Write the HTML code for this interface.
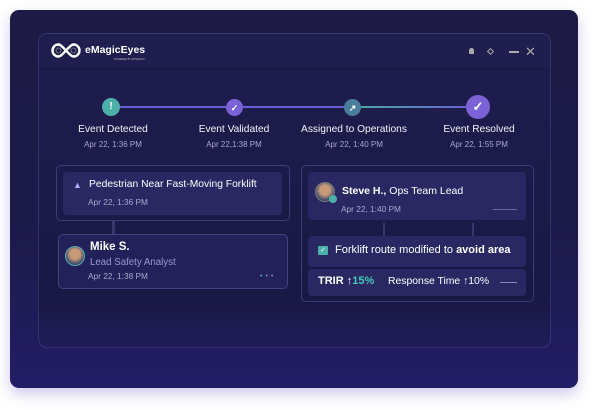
<!DOCTYPE html>
<html><head><style>
*{margin:0;padding:0;box-sizing:border-box}
body{width:600px;height:410px;background:#fff;font-family:"Liberation Sans",sans-serif;position:relative;overflow:hidden}
.abs{position:absolute;white-space:nowrap}
.outer{left:10px;top:10px;width:568px;height:378px;border-radius:9px;background:linear-gradient(180deg,#1d1b45 0%,#1c1a48 55%,#231d66 100%);box-shadow:0 6px 14px rgba(120,100,200,.35)}
.panel{left:38px;top:33px;width:513px;height:315px;border-radius:9px;border:1px solid rgba(120,110,200,.25);background:linear-gradient(180deg,#1f1d4e 0%,#1a1844 85%,#201d5a 100%)}
.hdr{left:39px;top:34px;width:511px;height:35px;border-radius:8px 8px 0 0;background:#201e4f;border-bottom:1px solid rgba(0,0,0,.2)}
.t{color:#f2f2fa;font-size:10.2px;text-align:center;width:140px}
.d{color:#a8a6cc;font-size:8px;text-align:center;width:140px}
.c{width:18px;height:18px;border-radius:50%;color:#fff;font-size:10px;text-align:center;line-height:18px;font-weight:bold}
.box{border:1px solid rgba(130,120,210,.35);border-radius:5px}
.in{background:#2a2862;border-radius:4px}
.line{height:2px}
</style></head><body>
<div class="abs outer"></div>
<div class="abs panel"></div>
<div class="abs hdr"></div>
<svg class="abs" style="left:50px;top:42px" width="32" height="17" viewBox="0 0 32 17"><path d="M8.5 2.5a6 6 0 1 0 0 12c4 0 11-12 15-12a6 6 0 1 1 0 12c-4 0-11-12-15-12z" fill="none" stroke="#fff" stroke-width="2.4"/><circle cx="8.5" cy="8.5" r="2.5" fill="none" stroke="#888" stroke-width=".8"/><circle cx="23.5" cy="8.5" r="2.5" fill="none" stroke="#888" stroke-width=".8"/></svg>
<div class="abs" style="left:85px;top:44px;color:#fff;font-size:10.5px;font-weight:bold">eMagicEyes</div>
<div class="abs" style="left:114px;top:58px;color:#bbb;font-size:2.5px">POWERED BY EHSMAGIC</div>
<div class="abs" style="left:469px;top:48px;width:5px;height:6px;background:#aaa;border-radius:3px 3px 1px 1px"></div>
<div class="abs" style="left:488px;top:49px;width:5px;height:5px;border:1px solid #aaa;transform:rotate(45deg)"></div>
<div class="abs" style="left:509px;top:51px;width:10px;height:1.5px;background:#aaa"></div>
<div class="abs" style="left:525px;top:44px;color:#aaa;font-size:13px">✕</div>

<div class="abs line" style="left:120px;top:106px;width:106px;background:#6a5fd4"></div>
<div class="abs line" style="left:243px;top:106px;width:102px;background:#6a5fd4"></div>
<div class="abs line" style="left:361px;top:106px;width:108px;background:linear-gradient(90deg,#4aa7a3,#6a5fd4)"></div>
<div class="abs c" style="left:102px;top:98px;background:#4bb0a8">!</div>
<div class="abs c" style="left:226px;top:99px;width:17px;height:17px;background:#7b62d6;font-size:9px">✓</div>
<div class="abs c" style="left:344px;top:99px;width:17px;height:17px;background:#4a7d9a;font-size:9px">↗</div>
<div class="abs c" style="left:466px;top:95px;width:24px;height:24px;line-height:24px;background:#7b62d6;font-size:13px">✓</div>
<div class="abs t" style="left:43px;top:124px">Event Detected</div>
<div class="abs d" style="left:43px;top:140px">Apr 22, 1:36 PM</div>
<div class="abs t" style="left:164px;top:124px">Event Validated</div>
<div class="abs d" style="left:164px;top:140px">Apr 22,1:38 PM</div>
<div class="abs t" style="left:284px;top:124px;width:140px">Assigned to Operations</div>
<div class="abs d" style="left:284px;top:140px">Apr 22, 1:40 PM</div>
<div class="abs t" style="left:409px;top:124px">Event Resolved</div>
<div class="abs d" style="left:409px;top:140px">Apr 22, 1:55 PM</div>

<div class="abs box" style="left:56px;top:165px;width:234px;height:56px"></div>
<div class="abs in" style="left:63px;top:172px;width:219px;height:43px"></div>
<div class="abs" style="left:73px;top:180px;color:#b7a8ff;font-size:9px">▲</div>
<div class="abs" style="left:89px;top:179px;color:#fff;font-size:10.3px">Pedestrian Near Fast-Moving Forklift</div>
<div class="abs" style="left:88px;top:197px;color:#a8a6cc;font-size:8.3px">Apr 22, 1:36 PM</div>
<div class="abs" style="left:112px;top:220px;width:3px;height:14px;background:#3a376e"></div>
<div class="abs box" style="left:58px;top:234px;width:230px;height:55px;background:#23215a"></div>
<div class="abs" style="left:65px;top:246px;width:20px;height:20px;border-radius:50%;background:radial-gradient(circle at 50% 40%,#c89a7a 35%,#3b4b6a 70%);border:1px solid #5aa"></div>
<div class="abs" style="left:90px;top:241px;color:#fff;font-size:11.5px;font-weight:bold">Mike S.</div>
<div class="abs" style="left:90px;top:257px;color:#9b98cc;font-size:9.7px">Lead Safety Analyst</div>
<div class="abs" style="left:88px;top:271px;color:#a8a6cc;font-size:8.3px">Apr 22, 1:38 PM</div>
<div class="abs" style="left:260px;top:273px;color:#4bb0a8;font-size:7px;letter-spacing:3px">•<span style="color:#8886bb">••</span></div>

<div class="abs box" style="left:301px;top:165px;width:233px;height:137px"></div>
<div class="abs in" style="left:308px;top:172px;width:218px;height:48px"></div>
<div class="abs" style="left:315px;top:182px;width:20px;height:20px;border-radius:50%;background:radial-gradient(circle at 50% 40%,#c89a7a 35%,#3b4b6a 70%);border:1px solid #777"></div>
<div class="abs" style="left:329px;top:195px;width:8px;height:8px;border-radius:50%;background:#4bb0a8"></div>
<div class="abs" style="left:342px;top:185px;color:#fff;font-size:10.5px"><b>Steve H.,</b> Ops Team Lead</div>
<div class="abs" style="left:341px;top:204px;color:#a8a6cc;font-size:8.3px">Apr 22, 1:40 PM</div>
<div class="abs" style="left:493px;top:209px;width:24px;height:1px;background:#6a68a0"></div>
<div class="abs" style="left:383px;top:223px;width:2px;height:13px;background:#3a376e"></div>
<div class="abs" style="left:472px;top:223px;width:2px;height:13px;background:#3a376e"></div>
<div class="abs in" style="left:308px;top:236px;width:218px;height:31px"></div>
<div class="abs" style="left:318px;top:246px;width:10px;height:9px;background:#4bb0a8;border-radius:1px;color:#fff;font-size:7px;text-align:center;line-height:9px">✓</div>
<div class="abs" style="left:335px;top:244px;color:#fff;font-size:11px">Forklift route modified to <b>avoid area</b></div>
<div class="abs in" style="left:308px;top:269px;width:218px;height:27px"></div>
<div class="abs" style="left:318px;top:275px;color:#fff;font-size:11px"><b>TRIR ↑</b><b style="color:#4bc7b8">15%</b></div>
<div class="abs" style="left:388px;top:276px;color:#fff;font-size:10.4px">Response Time ↑10%</div>
<div class="abs" style="left:500px;top:282px;width:17px;height:1px;background:#8886bb"></div>
</body></html>
